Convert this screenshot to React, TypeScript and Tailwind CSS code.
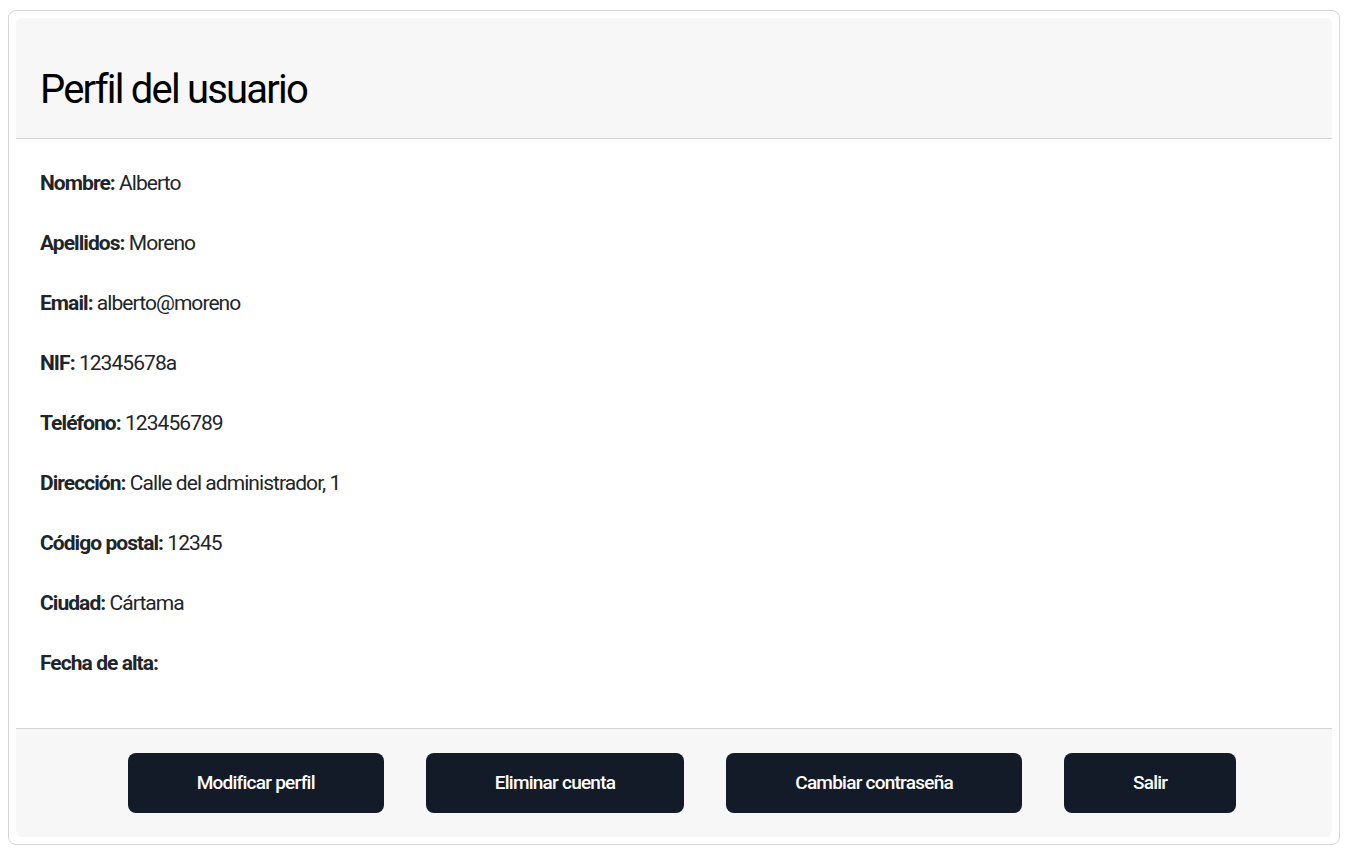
import React from "react";

const FIELDS: { label: string; value: string }[] = [
  { label: "Nombre:", value: "Alberto" },
  { label: "Apellidos:", value: "Moreno" },
  { label: "Email:", value: "alberto@moreno" },
  { label: "NIF:", value: "12345678a" },
  { label: "Teléfono:", value: "123456789" },
  { label: "Dirección:", value: "Calle del administrador, 1" },
  { label: "Código postal:", value: "12345" },
  { label: "Ciudad:", value: "Cártama" },
  { label: "Fecha de alta:", value: "" },
];

const ACTIONS = ["Modificar perfil", "Eliminar cuenta", "Cambiar contraseña", "Salir"];

export default function App(): JSX.Element {
  return (
    <div className="min-h-screen bg-white pt-[10px] pl-2 pr-[13px] pb-2 font-['Roboto',sans-serif]">
      <div className="border border-[#d6d6d6] rounded-lg p-[7px]">
        <div className="rounded-md overflow-hidden">
          {/* Header */}
          <div className="bg-[#f7f7f7] border-b border-[#d4d4d4] px-6 pt-[48px] pb-[24px]">
            <h1 className="text-[40px] leading-[48px] tracking-[-0.045em] text-black">Perfil del usuario</h1>
          </div>

          {/* Body */}
          <div className="bg-white px-6 pt-[32px] pb-[53px] flex flex-col gap-[36px]">
            {FIELDS.map((f) => (
              <p key={f.label} className="text-[21px] leading-[24px] tracking-[-0.045em] text-[#212529]">
                <span className="font-bold">{f.label}</span>
                {f.value ? " " + f.value : ""}
              </p>
            ))}
          </div>

          {/* Footer */}
          <div className="bg-[#f7f7f7] border-t border-[#d4d4d4] py-6 pl-[16px] flex justify-center gap-[42px]">
            {ACTIONS.map((a) => (
              <button
                key={a}
                className="h-[60px] px-[69px] rounded-lg bg-[#131a28] text-white text-[19px] font-medium tracking-[-0.04em]"
              >
                {a}
              </button>
            ))}
          </div>
        </div>
      </div>
    </div>
  );
}
